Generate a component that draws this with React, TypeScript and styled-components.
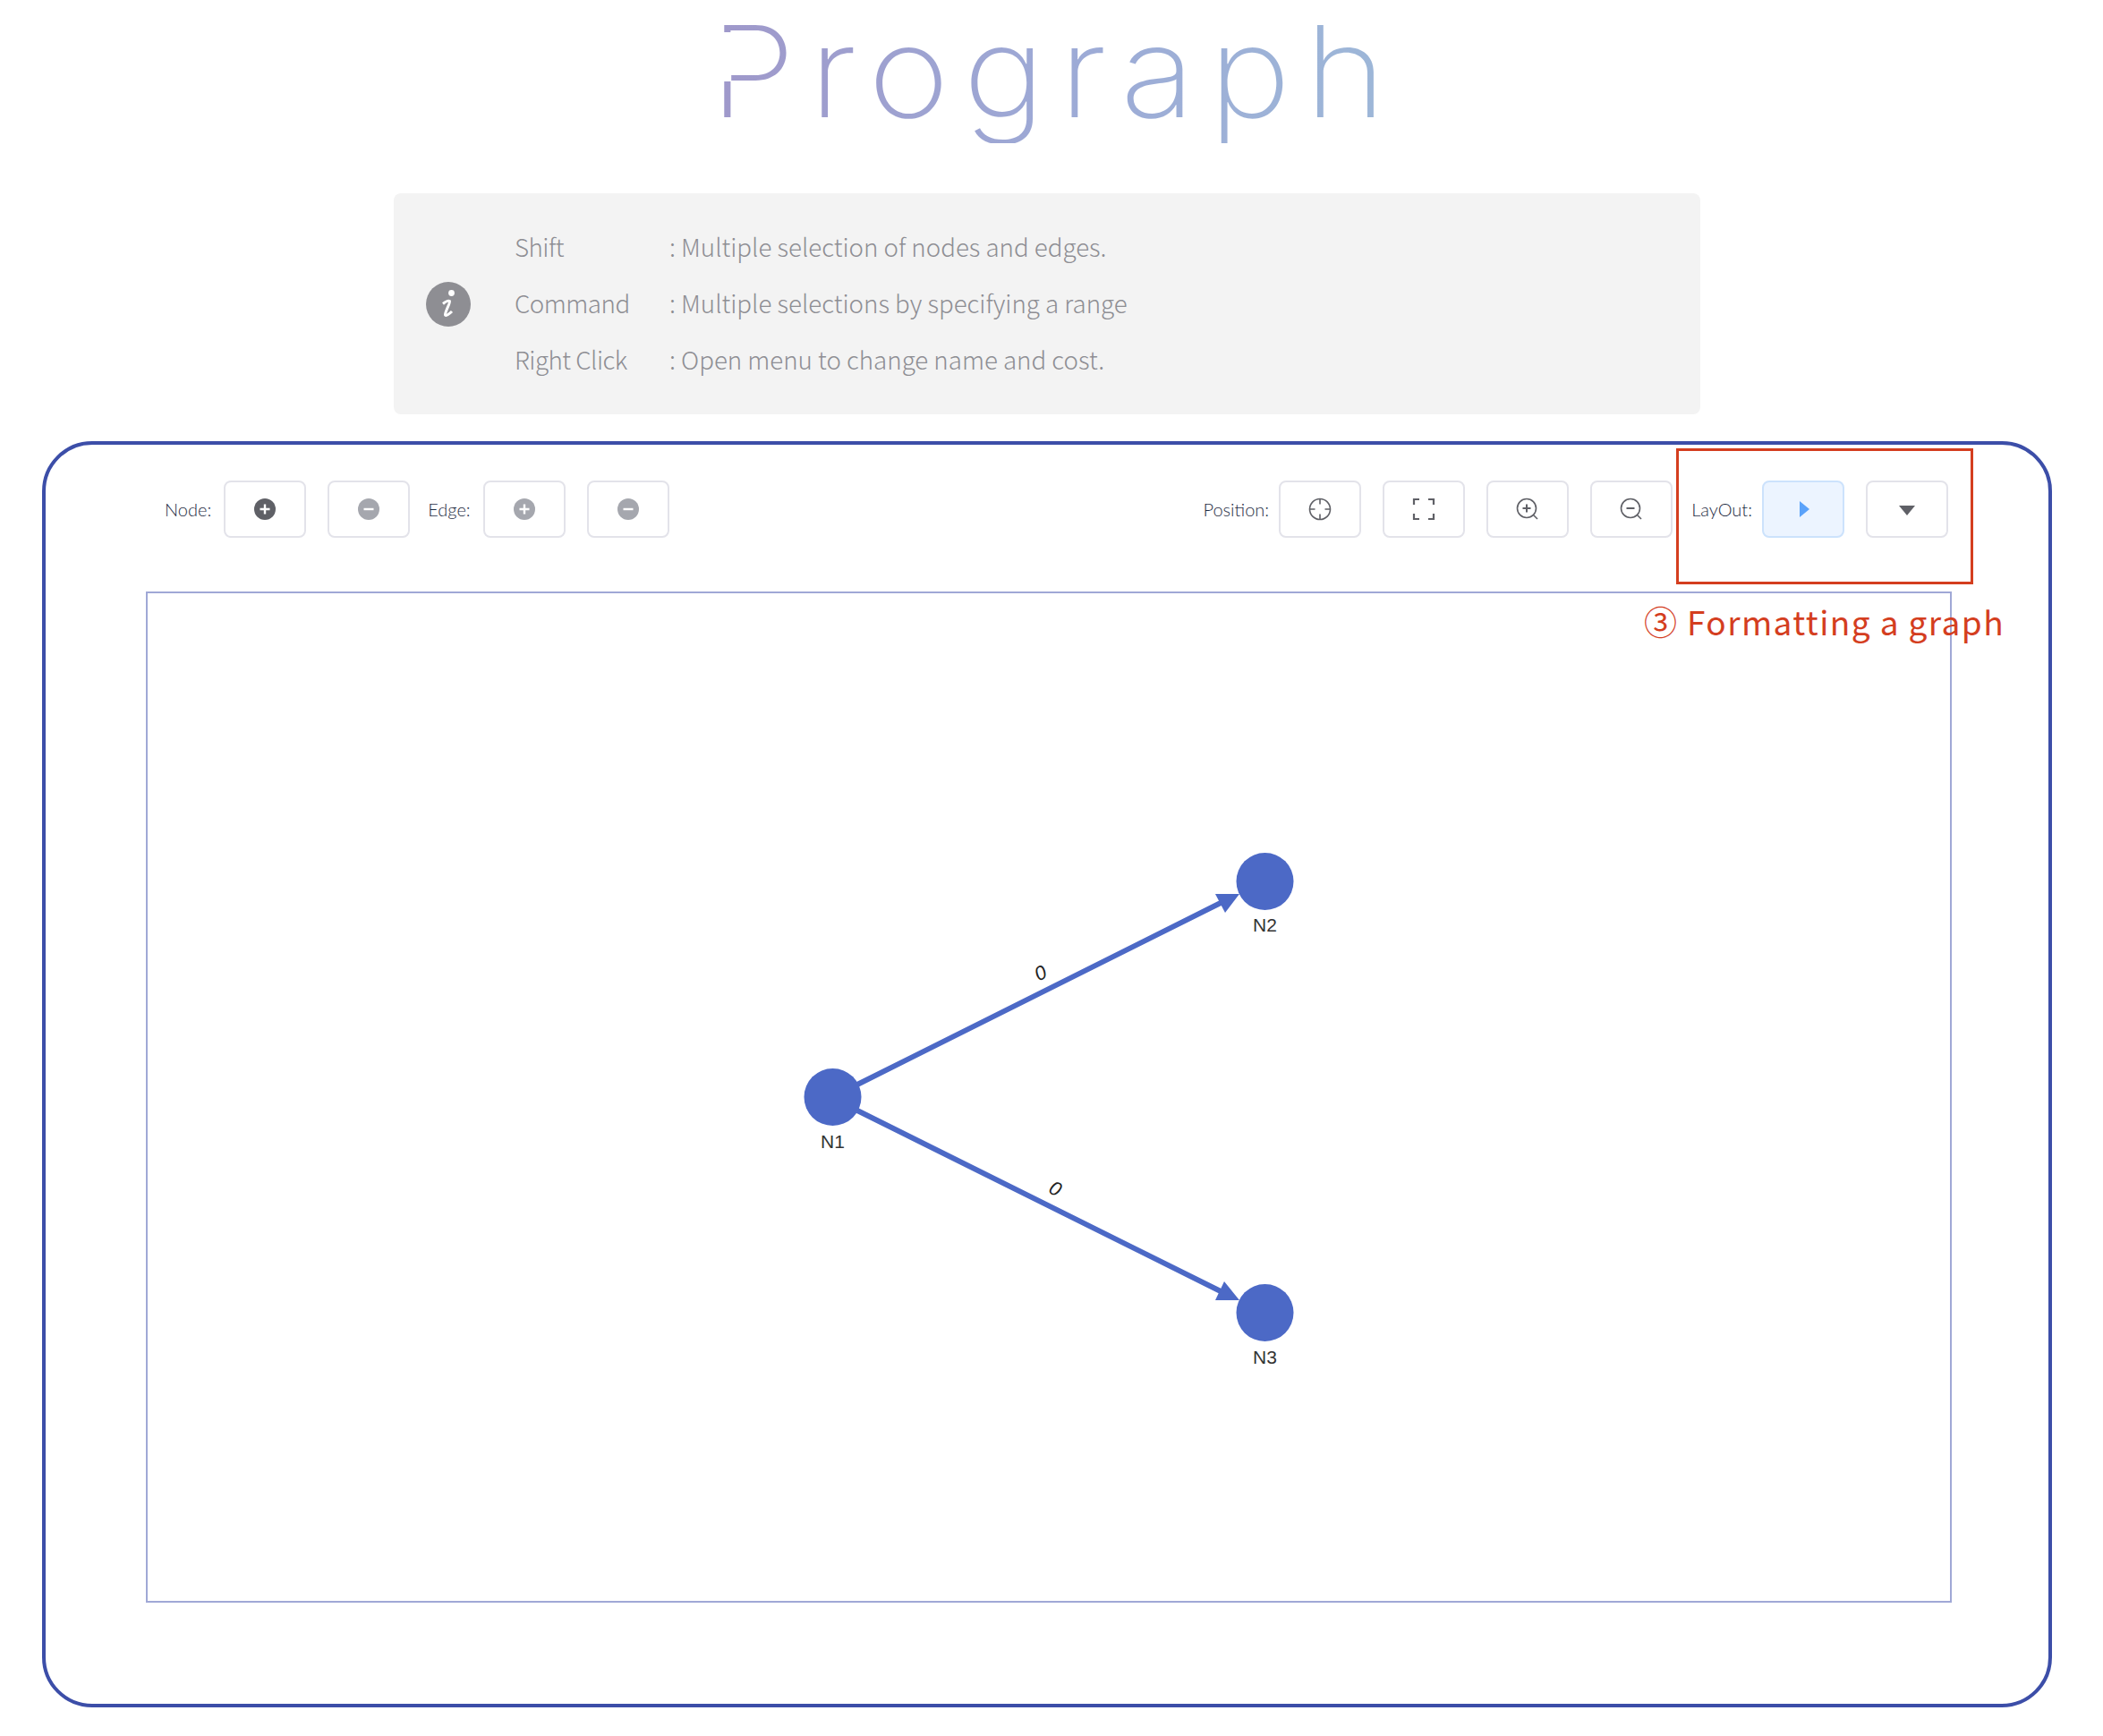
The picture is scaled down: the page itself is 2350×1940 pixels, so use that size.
import React from "react";
import styled, { createGlobalStyle } from "styled-components";

const GlobalStyle = createGlobalStyle`
  html, body {
    margin: 0;
    padding: 0;
    background: #fff;
  }
  body {
    font-family: "Lato", "Noto Sans", sans-serif;
  }
`;

const Page = styled.div`
  width: 2350px;
  height: 1940px;
`;

const Header = styled.header`
  height: 216px;
  padding-left: 793px;
  box-sizing: border-box;
`;

const Title = styled.h1`
  position: relative;
  display: inline-block;
  margin: 0;
  padding-right: 14px;
  font-family: "Inter", sans-serif;
  font-weight: 240;
  font-size: 141px;
  line-height: 160px;
  letter-spacing: 14px;
  background: linear-gradient(90deg, #9f98ca 0%, #9daad6 50%, #9db8d8 100%);
  -webkit-background-clip: text;
  background-clip: text;
  color: transparent;
  transform: scaleX(1.1);
  transform-origin: left center;

  /* the logo P has no stem above the bowl */
  &::after {
    content: "";
    position: absolute;
    left: 6px;
    top: 36px;
    width: 16px;
    height: 55px;
    background: #fff;
  }
`;

const InfoBox = styled.section`
  display: flex;
  align-items: center;
  gap: 49px;
  box-sizing: border-box;
  width: 1460px;
  height: 247px;
  margin: 0 0 30px 440px;
  padding-left: 36px;
  background: #f3f3f3;
  border-radius: 8px;
`;

const InfoIcon = styled.svg`
  flex: none;
  width: 50px;
  height: 50px;
`;

const InfoList = styled.div`
  display: grid;
  grid-template-columns: 173px 1fr;
  grid-auto-rows: 63px;
  align-items: center;
  margin-top: -3px;
  font-family: "Noto Sans CJK JP", "Noto Sans", sans-serif;
  font-weight: 300;
  font-size: 27.7px;
  color: #8e8e93;
`;

const InfoKey = styled.span`
  letter-spacing: -0.5px;
`;

const Frame = styled.section`
  position: relative;
  box-sizing: border-box;
  width: 2246px;
  height: 1415px;
  margin-left: 47px;
  padding: 40px 0 0 112px;
  border: 4px solid #3c4ea8;
  border-radius: 56px;
`;

const Toolbar = styled.div`
  display: flex;
  justify-content: space-between;
  width: 2014px;
  height: 64px;
  margin-bottom: 60px;
  padding-left: 21px;
  box-sizing: border-box;
`;

const ToolGroup = styled.div`
  display: flex;
  align-items: center;
`;

const ToolLabel = styled.span<{ $left?: number; $right?: number }>`
  margin: 0 ${(props) => props.$right ?? 11}px 0 ${(props) => props.$left ?? 0}px;
  font-weight: 300;
  font-size: 20px;
  color: #1f2d44;
`;

const ToolButton = styled.button<{ $active?: boolean; $gap?: boolean }>`
  display: flex;
  align-items: center;
  justify-content: center;
  box-sizing: border-box;
  width: 92px;
  height: 64px;
  margin: 0 ${(props) => (props.$gap ? "24px" : "0")} 0 0;
  padding: 0;
  background: ${(props) => (props.$active ? "#ecf4ff" : "#fff")};
  border: 2px solid ${(props) => (props.$active ? "#cce2fc" : "#e3e3ea")};
  border-radius: 8px;
`;

const RoundIcon = styled.svg`
  display: block;
  width: 24px;
  height: 24px;
`;

const LineIcon = styled.svg`
  display: block;
  width: 28px;
  height: 28px;
  fill: none;
  stroke: #5f6066;
  stroke-width: 1.6;
`;

const Canvas = styled.div`
  box-sizing: border-box;
  width: 2018px;
  height: 1130px;
  border: 2px solid #a0a8d6;
`;

const GraphSvg = styled.svg`
  display: block;
  width: 100%;
  height: 100%;
`;

const NodeLabel = styled.text`
  font-family: "Liberation Sans", sans-serif;
  font-size: 21px;
  fill: #333;
  text-anchor: middle;
`;

const EdgeLabel = styled.text`
  font-family: "Liberation Sans", sans-serif;
  font-style: italic;
  font-size: 22px;
  fill: #222;
  text-anchor: middle;
`;

const Highlight = styled.div`
  position: absolute;
  left: 1822px;
  top: 4px;
  box-sizing: border-box;
  width: 332px;
  height: 152px;
  border: 3px solid #d43e1f;
`;

const Annotation = styled.span`
  position: absolute;
  left: 1786px;
  top: 170px;
  font-family: "Noto Sans CJK JP", "Noto Sans", sans-serif;
  font-size: 37px;
  line-height: 54px;
  letter-spacing: 1.4px;
  color: #d43e1f;
  white-space: nowrap;
`;

const NODE_COLOR = "#4c69c6";

const CircleIcon = ({ kind, color }: { kind: "plus" | "minus"; color: string }) => (
  <RoundIcon viewBox="0 0 24 24">
    <circle cx="12" cy="12" r="12" fill={color} />
    <path
      d={kind === "plus" ? "M12 6.5v11M6.5 12h11" : "M6.5 12h11"}
      stroke="#fff"
      strokeWidth="2.4"
      fill="none"
    />
  </RoundIcon>
);

const ZoomIcon = ({ kind }: { kind: "plus" | "minus" }) => (
  <LineIcon viewBox="0 0 28 28">
    <circle cx="13" cy="13" r="10.5" />
    <path d="M20.5 20.5L25 25" />
    <path
      d={kind === "plus" ? "M13 8.5v9M8.5 13h9" : "M8.5 13h9"}
      strokeWidth="2"
    />
  </LineIcon>
);

const nodes = [
  { id: "N1", x: 930.5, y: 1226, labelY: 1283 },
  { id: "N2", x: 1413.5, y: 985, labelY: 1041 },
  { id: "N3", x: 1413.5, y: 1467, labelY: 1524 },
];

const App = () => {
  return (
    <Page>
      <GlobalStyle />
      <Header>
        <Title>Prograph</Title>
      </Header>
      <InfoBox>
        <InfoIcon viewBox="0 0 50 50">
          <circle cx="25" cy="25" r="25" fill="#8e8e93" />
          <circle cx="28.5" cy="12.5" r="3.4" fill="#fff" />
          <path
            d="M19 24.5C22 22 25 20.5 26.5 21.5C27.5 23 21 34 21.5 37C22 38.5 26 36 29 33"
            stroke="#fff"
            strokeWidth="3"
            fill="none"
          />
        </InfoIcon>
        <InfoList>
          <InfoKey>Shift</InfoKey>
          <span>: Multiple selection of nodes and edges.</span>
          <InfoKey>Command</InfoKey>
          <span>: Multiple selections by specifying a range</span>
          <InfoKey>Right Click</InfoKey>
          <span>: Open menu to change name and cost.</span>
        </InfoList>
      </InfoBox>
      <Frame>
        <Toolbar>
          <ToolGroup>
            <ToolLabel $right={14}>Node:</ToolLabel>
            <ToolButton $gap>
              <CircleIcon kind="plus" color="#5f6066" />
            </ToolButton>
            <ToolButton>
              <CircleIcon kind="minus" color="#a5a7ae" />
            </ToolButton>
            <ToolLabel $left={20} $right={14}>Edge:</ToolLabel>
            <ToolButton $gap>
              <CircleIcon kind="plus" color="#a5a7ae" />
            </ToolButton>
            <ToolButton>
              <CircleIcon kind="minus" color="#a5a7ae" />
            </ToolButton>
          </ToolGroup>
          <ToolGroup>
            <ToolLabel>Position:</ToolLabel>
            <ToolButton $gap>
              <LineIcon viewBox="0 0 28 28">
                <circle cx="14" cy="14" r="11.5" />
                <path d="M14 2.5v6M14 19.5v6M2.5 14h6M19.5 14h6" />
              </LineIcon>
            </ToolButton>
            <ToolButton $gap>
              <LineIcon viewBox="0 0 28 28">
                <path
                  d="M3 9V3h6M19 3h6v6M3 19v6h6M25 19v6h-6"
                  strokeWidth="2.2"
                />
              </LineIcon>
            </ToolButton>
            <ToolButton $gap>
              <ZoomIcon kind="plus" />
            </ToolButton>
            <ToolButton>
              <ZoomIcon kind="minus" />
            </ToolButton>
            <ToolLabel $left={21}>LayOut:</ToolLabel>
            <ToolButton $gap $active>
              <RoundIcon viewBox="0 0 24 24">
                <path d="M8 3L19 12L8 21z" fill="#5aa2fa" />
              </RoundIcon>
            </ToolButton>
            <ToolButton>
              <RoundIcon viewBox="0 0 24 24">
                <path d="M3 8h18L12 19z" fill="#5f6066" />
              </RoundIcon>
            </ToolButton>
          </ToolGroup>
        </Toolbar>
        <Canvas>
          <GraphSvg viewBox="165 663 2014 1126">
            <path
              d="M958 1212L1372 1005M958 1241L1372 1447"
              stroke={NODE_COLOR}
              strokeWidth="6"
              fill="none"
            />
            <path d="M1358 999L1369 1020L1385 999z" fill={NODE_COLOR} />
            <path d="M1358 1453L1368 1432L1385 1453z" fill={NODE_COLOR} />
            {nodes.map((node) => (
              <g key={node.id}>
                <circle cx={node.x} cy={node.y} r="32" fill={NODE_COLOR} />
                <NodeLabel x={node.x} y={node.labelY}>
                  {node.id}
                </NodeLabel>
              </g>
            ))}
            <EdgeLabel transform="translate(1166 1094) rotate(-26.5)">0</EdgeLabel>
            <EdgeLabel transform="translate(1176 1335) rotate(26.5)">0</EdgeLabel>
          </GraphSvg>
        </Canvas>
        <Highlight />
        <Annotation>③ Formatting a graph</Annotation>
      </Frame>
    </Page>
  );
};

export default App;
